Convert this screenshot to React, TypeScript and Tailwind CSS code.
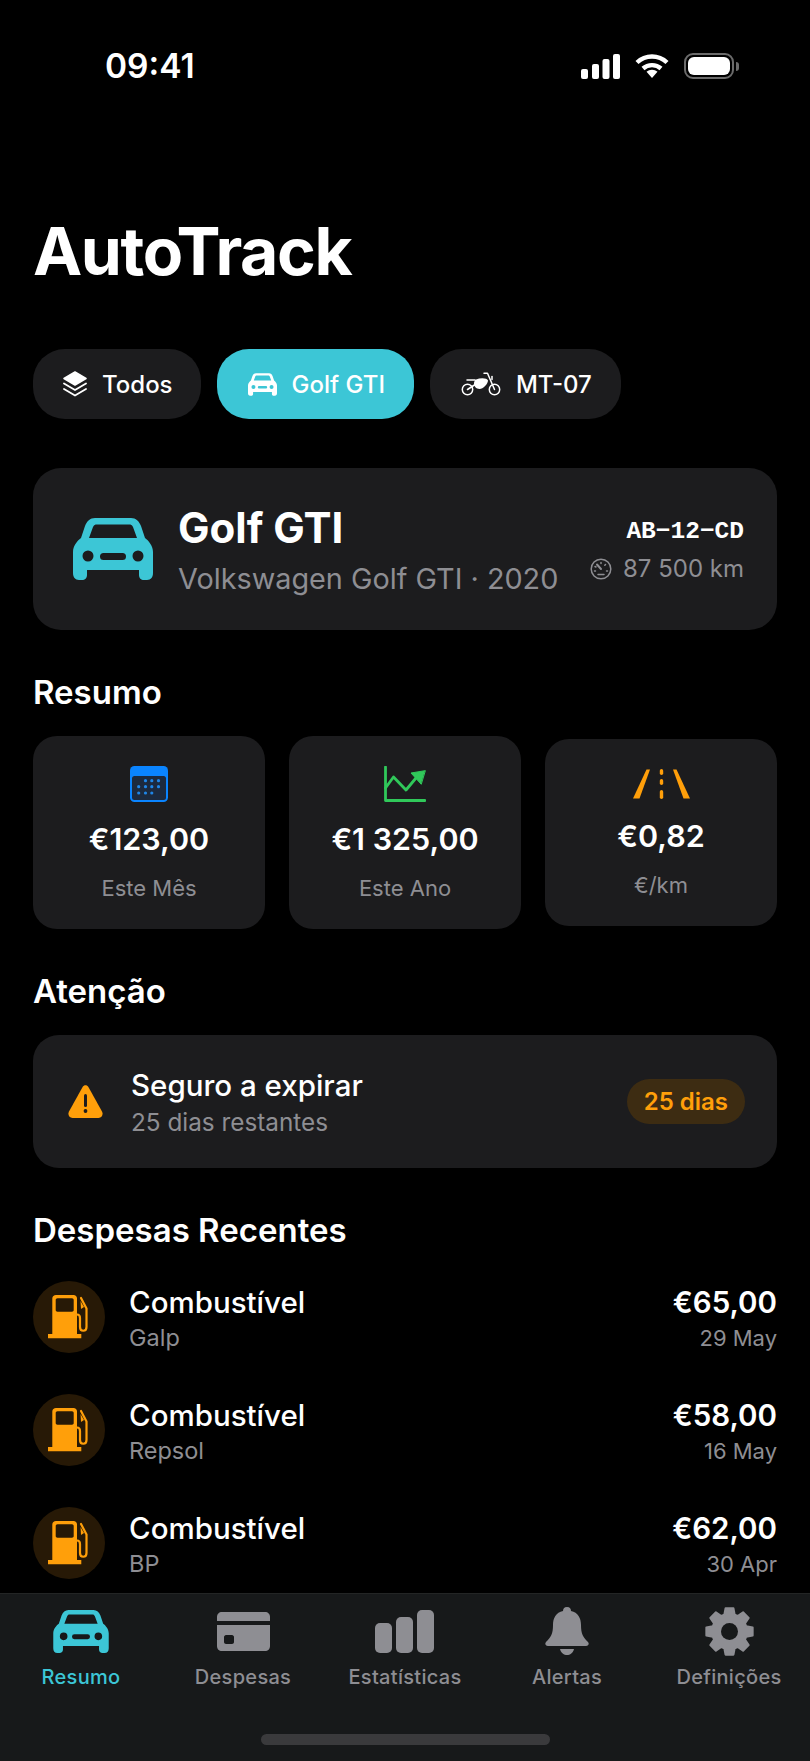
import type { ReactNode } from "react";

const CAR_BODY =
  "M22 0H58C63 0 66 3 68 8L72 20C76 23 80 28 80 34V55C80 59 78 62 74 62H71C68 62 66 60 66 57V52H14V57C14 60 12 62 9 62H6C2 62 0 59 0 55V34C0 28 4 23 8 20L12 8C14 3 17 0 22 0ZM16 20H64L60 9C59 7 58 6.5 56 6.5H24C22 6.5 21 7 20 9ZM15 32.5A5.5 5.5 0 1 0 15 43.5A5.5 5.5 0 1 0 15 32.5ZM65 32.5A5.5 5.5 0 1 0 65 43.5A5.5 5.5 0 1 0 65 32.5ZM30.5 35A3.5 3.5 0 0 0 30.5 42H49.5A3.5 3.5 0 0 0 49.5 35Z";

function CarIcon({ className }: { className: string }) {
  return (
    <svg viewBox="0 0 80 62" className={className} fill="currentColor">
      <path fillRule="evenodd" d={CAR_BODY} />
    </svg>
  );
}

function LayersIcon() {
  return (
    <svg viewBox="0 0 24 26" className="w-[24px] h-[26px]" fill="none" stroke="white">
      <path d="M12 1L23 7.5L12 14L1 7.5Z" fill="white" strokeWidth="1.5" strokeLinejoin="round" />
      <path d="M1 12.5L12 19L23 12.5" strokeWidth="1.8" strokeLinecap="round" strokeLinejoin="round" />
      <path d="M1 18L12 24.5L23 18" strokeWidth="1.8" strokeLinecap="round" strokeLinejoin="round" />
    </svg>
  );
}

function MotoIcon() {
  return (
    <svg viewBox="0 0 40 24" className="w-[40px] h-[24px]" fill="none" stroke="white" strokeWidth="1.5" strokeLinecap="round" strokeLinejoin="round">
      <circle cx="6.5" cy="17.5" r="5.2" />
      <circle cx="33.5" cy="17.5" r="5.2" />
      <path d="M23 1.2H26.5L33.5 17.5" />
      <path d="M6.5 17.5L15 12" />
      <path d="M6 8H14" />
      <path d="M31 4.5V7.5" />
      <path d="M15 7.5C20 5.5 26 6 27 8.5C27 12 22 17 18.5 17C15 17 13 14 13 11C13 9.5 14 8 15 7.5Z" fill="white" stroke="none" />
    </svg>
  );
}

function GaugeIcon() {
  return (
    <svg viewBox="0 0 22 22" className="w-[22px] h-[22px]" fill="none" stroke="#8e8e93" strokeWidth="1.5" strokeLinecap="round">
      <circle cx="11" cy="11" r="9.8" />
      <path d="M11 11L7 6.5" strokeWidth="2" />
      <path d="M11 4.5V5.5M5 8.5L6 9M4.5 13H5.5M17.5 13H16.5M15.5 6.5L14.8 7.2M8 16.5H14" />
    </svg>
  );
}

function CalendarIcon() {
  const dots = [
    [15.5, 14.7], [21.8, 14.7], [28.5, 14.7],
    [8.7, 20.7], [15.5, 20.7], [21.8, 20.7], [28.5, 20.7],
    [8.7, 27], [15.5, 27], [21.8, 27],
  ];
  return (
    <svg viewBox="0 0 38 36" className="w-[38px] h-[36px]">
      <rect width="38" height="36" rx="4.5" fill="#0a84ff" />
      <rect x="2" y="10" width="34" height="24" rx="2.5" fill="#1c2a3f" />
      {dots.map(([x, y]) => (
        <circle key={`${x}-${y}`} cx={x} cy={y} r="1.6" fill="#1f86e8" />
      ))}
    </svg>
  );
}

function ChartIcon() {
  return (
    <svg viewBox="0 0 42 36" className="w-[42px] h-[36px]" fill="none" stroke="#30c85a" strokeWidth="2.8" strokeLinecap="round" strokeLinejoin="round">
      <path d="M1.5 1V34.5H41" />
      <path d="M1.5 22L9.5 11L22 24L32 12" />
      <path d="M41 4.7L27 7L37 18Z" fill="#30c85a" stroke="#30c85a" strokeWidth="1" />
    </svg>
  );
}

function RoadIcon() {
  return (
    <svg viewBox="0 0 57 30" className="w-[57px] h-[30px]" fill="#ff9f0a">
      <path d="M13.5 0.5H17L6.5 29.5H0Z" />
      <path d="M43.5 0.5H40L50.5 29.5H57Z" />
      <rect x="26.8" y="0" width="3.4" height="6" rx="1.7" />
      <rect x="26.8" y="10" width="3.4" height="6" rx="1.7" />
      <rect x="26.8" y="21" width="3.4" height="9" rx="1.7" />
    </svg>
  );
}

function WarningIcon() {
  return (
    <svg viewBox="0 0 35 33" className="w-[35px] h-[33px] shrink-0">
      <path d="M14.6 2C15.9-.2 19.1-.2 20.4 2L34 26.5C35.6 29.5 33.8 33 30.5 33H4.5C1.2 33-.6 29.5 1 26.5Z" fill="#ff9f0a" />
      <rect x="16" y="9" width="3" height="13" rx="1.5" fill="#1c1c1e" />
      <circle cx="17.5" cy="26" r="1.9" fill="#1c1c1e" />
    </svg>
  );
}

function FuelIcon() {
  return (
    <svg viewBox="0 0 42 44" className="w-[42px] h-[44px]" fill="none">
      <path
        fillRule="evenodd"
        fill="#ff9f0a"
        d="M8 0H25.5C27.5 0 29 1.5 29 3.5V39H33.3V43.3H0V39H4.3V3.5C4.3 1.5 6 0 8 0ZM9.5 3.3C8.5 3.3 7.7 4 7.7 5V15C7.7 16 8.5 16.7 9.5 16.7H24C25 16.7 25.7 16 25.7 15V5C25.7 4 25 3.3 24 3.3Z"
      />
      <path d="M33 3L38.5 13.5V32C38.5 37 32 37 32 32V23C32 20.5 31 19.5 29 19.5" stroke="#ff9f0a" strokeWidth="2.2" strokeLinecap="round" strokeLinejoin="round" />
      <path d="M32.5 6L36 12L33 14Z" fill="#ff9f0a" />
    </svg>
  );
}

function CardIcon() {
  return (
    <svg viewBox="0 0 53 39" className="w-[53px] h-[39px]" fill="#8e8e93">
      <path d="M5 0H48C51 0 53 2 53 5V9H0V5C0 2 2 0 5 0Z" />
      <path fillRule="evenodd" d="M0 13H53V34C53 37 51 39 48 39H5C2 39 0 37 0 34ZM9 23C8 23 7 24 7 25V30C7 31 8 32 9 32H15C16 32 17 31 17 30V25C17 24 16 23 15 23Z" />
    </svg>
  );
}

function BarsIcon() {
  return (
    <svg viewBox="0 0 59 43" className="w-[59px] h-[43px] -translate-x-[1px]" fill="#8e8e93">
      <rect x="0" y="13" width="17" height="30" rx="5" />
      <rect x="21" y="7" width="17" height="36" rx="5" />
      <rect x="42" y="0" width="17" height="43" rx="5" />
    </svg>
  );
}

function BellIcon() {
  return (
    <svg viewBox="0 0 44 48" className="w-[44px] h-[48px]" fill="#8e8e93">
      <path d="M22 0C25 0 26 2 26 4C33 5.5 36 11 36 18C36 27 38 30 43 35C44.5 37 43.5 39 41 39H3C.5 39-.5 37 1 35C6 30 8 27 8 18C8 11 11 5.5 18 4C18 2 19 0 22 0Z" />
      <path d="M15 42H29C28 46 25 48 22 48C19 48 16 46 15 42Z" />
    </svg>
  );
}

// eight-tooth gear, same outline repeated around the centre
function gearPath() {
  const cx = 24.5;
  const cy = 24.5;
  const pts: string[] = [];
  for (let i = 0; i < 8; i++) {
    const a = (i * Math.PI) / 4 - Math.PI / 2;
    const at = (r: number, da: number) =>
      `${(cx + r * Math.cos(a + da)).toFixed(2)} ${(cy + r * Math.sin(a + da)).toFixed(2)}`;
    pts.push(at(17.5, -0.3), at(23.5, -0.17), at(23.5, 0.17), at(17.5, 0.3));
  }
  return `M${pts.join("L")}Z`;
}

function GearIcon() {
  return (
    <svg viewBox="0 0 49 49" className="w-[49px] h-[49px]">
      <path d={gearPath()} fill="#8e8e93" stroke="#8e8e93" strokeWidth="2" strokeLinejoin="round" />
      <circle cx="24.5" cy="24.5" r="8.5" fill="#17191a" />
    </svg>
  );
}

function StatusBar() {
  return (
    <div className="flex items-center justify-between h-[26px] pl-[105px] pr-[71px]">
      <span className="text-[33.5px] leading-[26px] font-semibold text-white">09:41</span>
      <div className="flex items-center gap-[15px]">
        <svg viewBox="0 0 39 25" className="w-[39px] h-[25px]" fill="white">
          <rect x="0" y="15" width="7" height="10" rx="2" />
          <rect x="11" y="10" width="7" height="15" rx="2" />
          <rect x="21.5" y="5" width="7" height="20" rx="2" />
          <rect x="32" y="0" width="7" height="25" rx="2" />
        </svg>
        <svg viewBox="0 0 34 24" className="w-[34px] h-[24px]" fill="none" stroke="white" strokeWidth="4.4">
          <path d="M2 8.5C10.5 0.5 23.5 0.5 32 8.5" />
          <path d="M8 14.5C13 10 21 10 26 14.5" />
          <path d="M11.5 17.8C14.5 15 19.5 15 22.5 17.8L17 24Z" fill="white" stroke="none" />
        </svg>
        <div className="flex items-center gap-[2px]">
          <div className="w-[50px] h-[26px] rounded-[9px] border-2 border-[#6b6b6b] p-[2px]">
            <div className="w-full h-full rounded-[6px] bg-white" />
          </div>
          <div className="w-[3px] h-[9px] rounded-r-full bg-[#6b6b6b]" />
        </div>
      </div>
    </div>
  );
}

function Chip({ icon, label, active, className }: { icon: ReactNode; label: string; active?: boolean; className: string }) {
  return (
    <div className={`flex items-center h-[70px] rounded-[32px] text-[24px] font-medium text-white ${active ? "bg-[#3cc6d6]" : "bg-[#1c1c1e]"} ${className}`}>
      {icon}
      <span className="pt-[2px]">{label}</span>
    </div>
  );
}

function Heading({ children }: { children: ReactNode }) {
  return <h2 className="mt-[42px] text-[33px] leading-[40px] font-semibold text-white">{children}</h2>;
}

function StatCard({ icon, value, label }: { icon: ReactNode; value: string; label: string }) {
  return (
    <div className="flex-1 flex flex-col items-center rounded-[24px] bg-[#1c1c1e] pt-[30px] pb-[28px]">
      {icon}
      <div className="mt-[20px] text-[30.5px] leading-[34px] font-semibold text-white">{value}</div>
      <div className="mt-[19px] text-[22px] leading-[26px] text-[#8e8e93]">{label}</div>
    </div>
  );
}

const expenses = [
  { place: "Galp", amount: "€65,00", date: "29 May" },
  { place: "Repsol", amount: "€58,00", date: "16 May" },
  { place: "BP", amount: "€62,00", date: "30 Apr" },
];

const tabs = [
  { label: "Resumo", icon: <CarIcon className="w-[56px] h-[43px]" />, active: true },
  { label: "Despesas", icon: <CardIcon /> },
  { label: "Estatísticas", icon: <BarsIcon /> },
  { label: "Alertas", icon: <BellIcon /> },
  { label: "Definições", icon: <GearIcon /> },
];

export default function App() {
  return (
    <div className="flex flex-col h-[1761px] w-[810px] overflow-hidden bg-black text-white [font-family:Inter,sans-serif]">
      <main className="flex-1 min-h-0 overflow-hidden pt-[53px]">
        <StatusBar />

        <div className="px-[33px]">
          <h1 className="mt-[132px] text-[66px] leading-[80px] font-bold tracking-[-1.4px] text-white">AutoTrack</h1>

          {/* Vehicle filter */}
          <div className="flex gap-[16px] mt-[58px]">
            <Chip icon={<LayersIcon />} label="Todos" className="pl-[30px] pr-[28px] gap-[15px]" />
            <Chip icon={<CarIcon className="w-[29px] h-[23px]" />} label="Golf GTI" active className="pl-[31px] pr-[29px] gap-[15px]" />
            <Chip icon={<MotoIcon />} label="MT-07" className="pl-[31px] pr-[29px] gap-[15px]" />
          </div>

          {/* Selected vehicle */}
          <div className="flex items-center h-[162px] mt-[49px] rounded-[28px] bg-[#1c1c1e] pl-[40px] pr-[33px]">
            <CarIcon className="w-[80px] h-[62px] shrink-0 text-[#3cc6d6]" />
            <div className="ml-[25px] flex-1 pt-[2px]">
              <div className="text-[42px] leading-[50px] font-bold text-white">Golf GTI</div>
              <div className="mt-[8px] text-[28.8px] leading-[36px] text-[#8e8e93]">Volkswagen Golf GTI · 2020</div>
            </div>
            <div className="flex flex-col items-end pt-[4px]">
              <div className="text-[24.5px] leading-[28px] font-bold text-white [font-family:'Liberation_Mono',monospace]">AB−12−CD</div>
              <div className="flex items-center gap-[11px] mt-[7px] text-[24px] leading-[32px] text-[#8e8e93]">
                <GaugeIcon />
                <span>87 500 km</span>
              </div>
            </div>
          </div>

          <Heading>Resumo</Heading>
          <div className="flex items-center gap-[24px] mt-[24px]">
            <StatCard icon={<CalendarIcon />} value="€123,00" label="Este Mês" />
            <StatCard icon={<ChartIcon />} value="€1 325,00" label="Este Ano" />
            <StatCard icon={<RoadIcon />} value="€0,82" label="€/km" />
          </div>

          <Heading>Atenção</Heading>
          <div className="flex items-center h-[133px] mt-[24px] rounded-[26px] bg-[#1c1c1e] pl-[35px] pr-[32px]">
            <WarningIcon />
            <div className="ml-[28px] flex-1">
              <div className="text-[29.5px] leading-[36px] font-medium text-white">Seguro a expirar</div>
              <div className="mt-[4px] text-[24.3px] leading-[30px] text-[#8e8e93]">25 dias restantes</div>
            </div>
            <div className="flex items-center h-[45px] rounded-full bg-[#3d2c12] px-[17px] text-[24px] font-semibold text-[#ff9f0a]">25 dias</div>
          </div>

          <Heading>Despesas Recentes</Heading>
          <div className="flex flex-col gap-[41px] mt-[31px]">
            {expenses.map((e) => (
              <div key={e.place} className="flex items-center h-[72px]">
                <div className="flex items-center justify-center w-[72px] h-[72px] rounded-full bg-[#271906]">
                  <FuelIcon />
                </div>
                <div className="ml-[24px] flex-1 pt-[3px]">
                  <div className="text-[29.5px] leading-[36px] font-medium text-white">Combustível</div>
                  <div className="mt-[3px] text-[23.5px] leading-[30px] text-[#8e8e93]">{e.place}</div>
                </div>
                <div className="text-right pt-[3px]">
                  <div className="text-[29.5px] leading-[36px] font-semibold text-white">{e.amount}</div>
                  <div className="mt-[3px] text-[22px] leading-[30px] text-[#8e8e93]">{e.date}</div>
                </div>
              </div>
            ))}
          </div>
        </div>
      </main>

      {/* Tab bar */}
      <nav className="shrink-0 h-[168px] bg-[#17191a] border-t border-[#232525] pt-[13px]">
        <div className="grid grid-cols-5">
          {tabs.map((t) => (
            <div key={t.label} className={`flex flex-col items-center ${t.active ? "text-[#3cc6d6]" : "text-[#8e8e93]"}`}>
              <div className="flex items-center justify-center h-[48px]">{t.icon}</div>
              <div className="mt-[9px] text-[20px] leading-[26px] font-medium tracking-[0.3px]">{t.label}</div>
            </div>
          ))}
        </div>
        <div className="mx-auto mt-[44px] w-[289px] h-[11px] rounded-full bg-[#3a3a3c]" />
      </nav>
    </div>
  );
}
